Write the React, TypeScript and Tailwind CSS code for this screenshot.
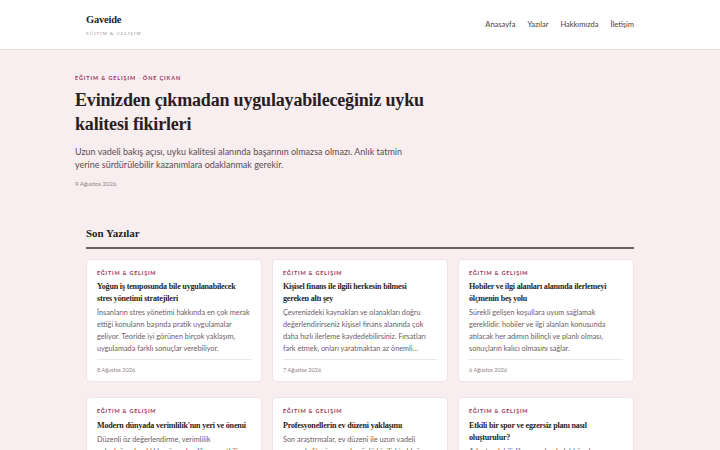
const serif = { fontFamily: '"Liberation Serif", "DejaVu Serif", serif' };

const posts = [
  {
    title: 'Yoğun iş temposunda bile uygulanabilecek stres yönetimi stratejileri',
    excerpt:
      'İnsanların stres yönetimi hakkında en çok merak ettiği konuların başında pratik uygulamalar geliyor. Teoride iyi görünen birçok yaklaşım, uygulamada farklı sonuçlar verebiliyor.',
    date: '8 Ağustos 2026',
  },
  {
    title: 'Kişisel finans ile ilgili herkesin bilmesi gereken\u00a0altı\u00a0şey',
    excerpt:
      'Çevrenizdeki kaynakları ve olanakları doğru değerlendirirseniz kişisel finans alanında çok daha hızlı ilerleme kaydedebilirsiniz. Fırsatları fark etmek, onları yaratmaktan az önemli…',
    date: '7 Ağustos 2026',
  },
  {
    title: 'Hobiler ve ilgi alanları alanında ilerlemeyi ölçmenin beş yolu',
    excerpt:
      'Sürekli gelişen koşullara uyum sağlamak gereklidir. hobiler ve ilgi alanları konusunda atılacak her adımın bilinçli ve planlı olması, sonuçların kalıcı olmasını sağlar.',
    date: '6 Ağustos 2026',
  },
  {
    title: "Modern dünyada verimlilik'nın yeri ve önemi",
    excerpt:
      'Düzenli öz değerlendirme, verimlilik yolculuğunda sıklıkla göz ardı edilen en etkili araçlardan biridir. Küçük adımlar büyük farklar yaratır.',
    date: '5 Ağustos 2026',
  },
  {
    title: 'Profesyonellerin ev düzeni yaklaşımı',
    excerpt:
      'Son araştırmalar, ev düzeni ile uzun vadeli yaşam kalitesi arasında güçlü bir ilişki olduğunu gösteriyor. Bu bağlantı dikkate değer.',
    date: '4 Ağustos 2026',
  },
  {
    title: 'Etkili bir spor ve egzersiz planı nasıl oluşturulur?',
    excerpt:
      'Adapte olabilirlik açısından bakıldığında spor ve egzersiz alanında esnek kalmak uzun vadede başarıyı getirir.',
    date: '3 Ağustos 2026',
  },
];

function PostCard({ title, excerpt, date }: { title: string; excerpt: string; date: string }) {
  return (
    <article className="flex flex-col rounded-[4px] border border-[#f1e3e6] bg-white px-[10px] pt-[9px] pb-[7px]">
      <p className="text-[5.5px] font-bold uppercase tracking-[0.14em] text-[#9a3257]">Eğitim &amp; Gelişim</p>
      <h3
        className="mt-[4px] text-[8.1px] font-bold leading-[12px] tracking-[-0.025em] text-[#2a1d21]"
        style={serif}
      >
        {title}
      </h3>
      <p className="mt-[2px] text-[7.3px] leading-[12px] text-[#6e5d62]">{excerpt}</p>
      <div className="mt-[4px] border-t border-[#efe5e7] pt-[6px] text-[5.5px] text-[#8f8286]">{date}</div>
    </article>
  );
}

export default function App() {
  return (
    <div className="min-h-screen bg-[#f8eef0] text-[#2a1d21]" style={{ fontFamily: 'Lato, "Open Sans", sans-serif' }}>
      <header className="border-b border-[#f0dde1] bg-white">
        <div className="mx-auto flex h-[49px] max-w-[548px] items-center justify-between">
          <div className="pt-[4px]">
            <div className="text-[10.5px] font-bold leading-none tracking-[-0.02em] text-[#2a1d21]" style={serif}>
              Gaveide
            </div>
            <div className="mt-[6px] text-[4.5px] uppercase tracking-[0.22em] text-[#9a8c90]" style={serif}>
              Eğitim &amp; Gelişim
            </div>
          </div>
          <nav className="flex gap-[12px] pt-[1px] text-[7.5px] text-[#4a3a3f]">
            <a>Anasayfa</a>
            <a>Yazılar</a>
            <a>Hakkımızda</a>
            <a>İletişim</a>
          </nav>
        </div>
      </header>

      <section className="mx-auto max-w-[570px] pt-[24px]">
        <p className="text-[5.5px] font-bold uppercase tracking-[0.16em] text-[#9a3257]">
          Eğitim &amp; Gelişim <span className="text-[#c9a9b3]">·</span> Öne Çıkan
        </p>
        <h1
          className="mt-[6px] max-w-[370px] text-[18px] font-bold leading-[24px] tracking-[-0.01em] text-[#2a1d21]"
          style={serif}
        >
          Evinizden çıkmadan uygulayabileceğiniz uyku kalitesi fikirleri
        </h1>
        <p className="mt-[9px] max-w-[335px] text-[9px] leading-[13px] text-[#5c4c51]">
          Uzun vadeli bakış açısı, uyku kalitesi alanında başarının olmazsa olmazı. Anlık tatmin yerine sürdürülebilir
          kazanımlara odaklanmak gerekir.
        </p>
        <p className="mt-[8px] text-[6px] text-[#8f8286]">9 Ağustos 2026</p>
      </section>

      <main className="mx-auto max-w-[548px] pt-[37px] pb-[40px]">
        <h2 className="border-b-2 border-[#6b5f62] pb-[5px] text-[11px] font-bold text-[#2a1d21]" style={serif}>
          Son Yazılar
        </h2>
        <div className="mt-[10px] grid grid-cols-3 gap-x-[10px] gap-y-[15px]">
          {posts.map((p) => (
            <PostCard key={p.title} {...p} />
          ))}
        </div>
      </main>
    </div>
  );
}
